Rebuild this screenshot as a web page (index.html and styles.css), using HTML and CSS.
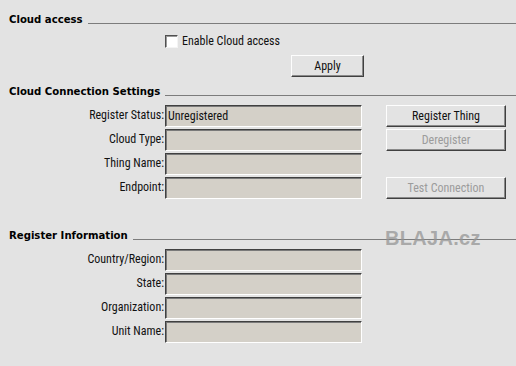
FILE: index.html
```html
<!DOCTYPE html>
<html lang="en">

<head>
    <meta charset="utf-8">
    <title>Cloud access</title>
    <link rel="stylesheet" href="styles.css">
</head>

<body>
    <div class="page">
        <div class="section-head">
            <h2>Cloud access</h2>
            <div class="rule"></div>
        </div>
        <div class="access">
            <label class="check">
                <input type="checkbox" id="enableCloud">
                <span>Enable Cloud access</span>
            </label>
            <button class="btn apply">Apply</button>
        </div>

        <div class="section-head">
            <h2>Cloud Connection Settings</h2>
            <div class="rule"></div>
        </div>
        <div class="grid">
            <label for="status">Register Status:</label>
            <input id="status" class="field" type="text" value="Unregistered" readonly>
            <button class="btn side">Register Thing</button>

            <label for="cloudType">Cloud Type:</label>
            <input id="cloudType" class="field" type="text" readonly>
            <button class="btn side" disabled>Deregister</button>

            <label for="thingName">Thing Name:</label>
            <input id="thingName" class="field" type="text" readonly>
            <div></div>

            <label for="endpoint">Endpoint:</label>
            <input id="endpoint" class="field" type="text" readonly>
            <button class="btn side" disabled>Test Connection</button>
        </div>

        <div class="section-head info-head">
            <h2>Register Information</h2>
            <div class="rule"></div>
            <div class="watermark">BLAJA.cz</div>
        </div>
        <div class="grid">
            <label for="country">Country/Region:</label>
            <input id="country" class="field" type="text" readonly>
            <div></div>

            <label for="state">State:</label>
            <input id="state" class="field" type="text" readonly>
            <div></div>

            <label for="org">Organization:</label>
            <input id="org" class="field" type="text" readonly>
            <div></div>

            <label for="unit">Unit Name:</label>
            <input id="unit" class="field" type="text" readonly>
            <div></div>
        </div>
    </div>
</body>

</html>
```
FILE: styles.css
```css
* {
    box-sizing: border-box;
}

body {
    margin: 0;
    background-color: #e3e3e3;
    color: #111;
    font-family: 'Roboto Condensed', 'DejaVu Sans Condensed', sans-serif;
    font-size: 12px;
}

.page {
    position: relative;
    padding: 13px 0 0 9px;
}

.section-head {
    position: relative;
    display: flex;
    align-items: flex-start;
    height: 14px;
}

.section-head h2 {
    margin: 0;
    font-family: 'DejaVu Sans Condensed', sans-serif;
    font-size: 11.25px;
    line-height: 14px;
    font-weight: bold;
    color: #000;
}

.rule {
    flex: 1;
    height: 11px;
    margin-left: 5px;
    border-bottom: 1px solid #7c7c7c;
}

.access {
    display: flex;
    flex-direction: column;
    align-items: flex-start;
    padding-left: 156px;
    margin: 8px 0;
}

.check {
    display: flex;
    align-items: center;
    height: 13px;
    line-height: 13px;
}

.check input {
    appearance: none;
    width: 13px;
    height: 13px;
    margin: 0 4px 0 0;
    background-color: #fff;
    border: 1px solid;
    border-color: #505050 #f4f4f4 #f4f4f4 #505050;
    box-shadow: inset 1px 1px #9a9a9a;
}

.btn {
    height: 22px;
    padding: 0;
    font-family: inherit;
    font-size: 12px;
    color: #111;
    background-color: #e3e3e3;
    border: 1px solid;
    border-color: #fdfdfd #404040 #404040 #fdfdfd;
    box-shadow: inset -1px -1px #8a8a8a;
}

.btn:disabled {
    color: #9c9c9c;
}

.apply {
    width: 73px;
    margin: 7px 0 0 126px;
}

.grid {
    display: grid;
    grid-template-columns: 156px 197px 144px;
    grid-auto-rows: 22px;
    row-gap: 2px;
    margin-top: 6px;
}

.grid label {
    text-align: right;
    line-height: 21px;
    padding-right: 1px;
}

.field {
    width: 197px;
    height: 22px;
    margin: 0;
    padding: 0 0 1px 2px;
    font-family: inherit;
    font-size: 12px;
    color: #111;
    background-color: #d4d0c8;
    border: 1px solid;
    border-color: #404040 #fff #fff #404040;
    box-shadow: inset 1px 1px #7a7a7a;
    outline: none;
}

.side {
    width: 120px;
    margin-left: 24px;
}

.info-head {
    margin-top: 30px;
}

.watermark {
    position: absolute;
    left: 376px;
    top: -2px;
    font-family: 'Liberation Sans', Arial, sans-serif;
    font-size: 20px;
    font-weight: bold;
    letter-spacing: 0.3px;
    color: rgba(150, 150, 150, 0.75);
}
```
